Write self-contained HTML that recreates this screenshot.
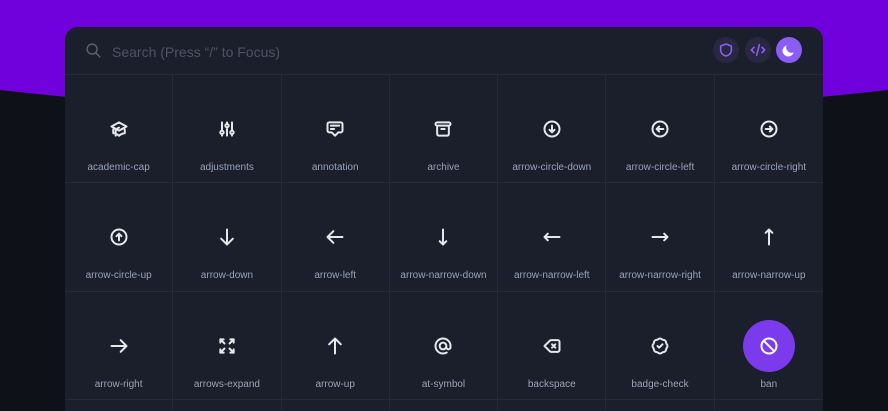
<!DOCTYPE html>
<html><head><meta charset="utf-8"><style>
*{margin:0;padding:0;box-sizing:border-box}
body{width:888px;height:411px;overflow:hidden;background:#0e1118;font-family:"Liberation Sans",sans-serif;position:relative}
#bg{position:absolute;left:0;top:0}
.panel{position:absolute;left:65px;top:27px;width:758px;height:384px;background:#1b1f2b;border-radius:13px 13px 0 0;overflow:hidden}
.head{height:48px;border-bottom:1px solid #262b38;position:relative}
.search{position:absolute;left:47px;top:17px;font-size:14px;color:#4b5466}
.grid{display:grid;grid-template-columns:repeat(7,1fr)}
.cell{height:108.4px;border-right:1px solid #262b38;border-bottom:1px solid #262b38;position:relative}
.cell.s{height:10px;border-bottom:none}
.cell:nth-child(7n){border-right:none}
.cell svg{position:absolute;left:50%;top:44px;margin-left:-10px;width:20px;height:20px}
.cell svg path{stroke-width:2.4}
.cell span{position:absolute;left:0;right:0;top:87px;text-align:center;font-size:10px;color:#97a3b8}
.btn{position:absolute;top:10px;width:26px;height:26px;border-radius:50%;background:#2a2740}
.btn svg{position:absolute;left:5px;top:5px;width:16px;height:16px}
.ban{position:absolute;left:50%;top:28px;margin-left:-26px;width:52px;height:52px;border-radius:50%;background:#7c3aed}
</style></head><body>
<svg id="bg" width="888" height="411"><path d="M0 0H888V90Q444 140 0 90Z" fill="#7000dc"/></svg>
<div class="panel">
<div class="head">
<svg style="position:absolute;left:20px;top:15px" width="17" height="17" viewBox="0 0 24 24" fill="none" stroke="#5a6274" stroke-width="2" stroke-linecap="round"><path d="M21 21l-6-6m2-5a7 7 0 11-14 0 7 7 0 0114 0z"/></svg>
<div class="search">Search (Press “/” to Focus)</div>
<div class="btn" style="left:648px"><svg viewBox="0 0 24 24" fill="none" stroke="#8b5cf6" stroke-width="2.4" stroke-linejoin="round"><path d="M12 3l8 3v6c0 5-4 8-8 9-4-1-8-4-8-9V6z"/></svg></div>
<div class="btn" style="left:680px"><svg viewBox="0 0 24 24" fill="none" stroke="#8b5cf6" stroke-width="2.4" stroke-linecap="round" stroke-linejoin="round"><path d="M10 20l4-16m4 4l4 4-4 4M6 16l-4-4 4-4"/></svg></div>
<div class="btn" style="left:711px;background:#8b5cf6"><svg viewBox="0 0 24 24"><path d="M19 15.5A8 8 0 018.5 5 8.5 8.5 0 1019 15.5z" fill="#fff"/></svg></div>
</div>
<div class="grid">
<div class="cell"><svg viewBox="0 0 24 24" fill="none" stroke="#e5e7eb" stroke-width="2" stroke-linecap="round" stroke-linejoin="round"><path d="M12 14l9-5-9-5-9 5 9 5zm0 0l6.16-3.422a12.083 12.083 0 01.665 6.479A11.952 11.952 0 0012 20.055a11.952 11.952 0 00-6.824-2.998 12.078 12.078 0 01.665-6.479L12 14zm-4 6v-7.5l4-2.222"/></svg><span>academic-cap</span></div>
<div class="cell"><svg viewBox="0 0 24 24" fill="none" stroke="#e5e7eb" stroke-width="2" stroke-linecap="round" stroke-linejoin="round"><path d="M12 6V4m0 2a2 2 0 100 4m0-4a2 2 0 110 4m-6 8a2 2 0 100-4m0 4a2 2 0 110-4m0 4v2m0-6V4m6 6v10m6-2a2 2 0 100-4m0 4a2 2 0 110-4m0 4v2m0-6V4"/></svg><span>adjustments</span></div>
<div class="cell"><svg viewBox="0 0 24 24" fill="none" stroke="#e5e7eb" stroke-width="2" stroke-linecap="round" stroke-linejoin="round"><path d="M7 8h10M7 12h4m1 8l-4-4H5a2 2 0 01-2-2V6a2 2 0 012-2h14a2 2 0 012 2v8a2 2 0 01-2 2h-3l-4 4z"/></svg><span>annotation</span></div>
<div class="cell"><svg viewBox="0 0 24 24" fill="none" stroke="#e5e7eb" stroke-width="2" stroke-linecap="round" stroke-linejoin="round"><path d="M5 8h14M5 8a2 2 0 110-4h14a2 2 0 110 4M5 8v10a2 2 0 002 2h10a2 2 0 002-2V8m-9 4h4"/></svg><span>archive</span></div>
<div class="cell"><svg viewBox="0 0 24 24" fill="none" stroke="#e5e7eb" stroke-width="2" stroke-linecap="round" stroke-linejoin="round"><path d="M15 13l-3 3m0 0l-3-3m3 3V8m0 13a9 9 0 110-18 9 9 0 010 18z"/></svg><span>arrow-circle-down</span></div>
<div class="cell"><svg viewBox="0 0 24 24" fill="none" stroke="#e5e7eb" stroke-width="2" stroke-linecap="round" stroke-linejoin="round"><path d="M11 15l-3-3m0 0l3-3m-3 3h8M3 12a9 9 0 1118 0 9 9 0 01-18 0z"/></svg><span>arrow-circle-left</span></div>
<div class="cell"><svg viewBox="0 0 24 24" fill="none" stroke="#e5e7eb" stroke-width="2" stroke-linecap="round" stroke-linejoin="round"><path d="M13 9l3 3m0 0l-3 3m3-3H8m13 0a9 9 0 11-18 0 9 9 0 0118 0z"/></svg><span>arrow-circle-right</span></div>
<div class="cell"><svg viewBox="0 0 24 24" fill="none" stroke="#e5e7eb" stroke-width="2" stroke-linecap="round" stroke-linejoin="round"><path d="M9 11l3-3m0 0l3 3m-3-3v8m0-13a9 9 0 110 18 9 9 0 010-18z"/></svg><span>arrow-circle-up</span></div>
<div class="cell"><svg viewBox="0 0 24 24" fill="none" stroke="#e5e7eb" stroke-width="2" stroke-linecap="round" stroke-linejoin="round"><path d="M19 14l-7 7m0 0l-7-7m7 7V3"/></svg><span>arrow-down</span></div>
<div class="cell"><svg viewBox="0 0 24 24" fill="none" stroke="#e5e7eb" stroke-width="2" stroke-linecap="round" stroke-linejoin="round"><path d="M10 19l-7-7m0 0l7-7m-7 7h18"/></svg><span>arrow-left</span></div>
<div class="cell"><svg viewBox="0 0 24 24" fill="none" stroke="#e5e7eb" stroke-width="2" stroke-linecap="round" stroke-linejoin="round"><path d="M16 17l-4 4m0 0l-4-4m4 4V3"/></svg><span>arrow-narrow-down</span></div>
<div class="cell"><svg viewBox="0 0 24 24" fill="none" stroke="#e5e7eb" stroke-width="2" stroke-linecap="round" stroke-linejoin="round"><path d="M7 16l-4-4m0 0l4-4m-4 4h18"/></svg><span>arrow-narrow-left</span></div>
<div class="cell"><svg viewBox="0 0 24 24" fill="none" stroke="#e5e7eb" stroke-width="2" stroke-linecap="round" stroke-linejoin="round"><path d="M17 8l4 4m0 0l-4 4m4-4H3"/></svg><span>arrow-narrow-right</span></div>
<div class="cell"><svg viewBox="0 0 24 24" fill="none" stroke="#e5e7eb" stroke-width="2" stroke-linecap="round" stroke-linejoin="round"><path d="M8 7l4-4m0 0l4 4m-4-4v18"/></svg><span>arrow-narrow-up</span></div>
<div class="cell"><svg viewBox="0 0 24 24" fill="none" stroke="#e5e7eb" stroke-width="2" stroke-linecap="round" stroke-linejoin="round"><path d="M14 5l7 7m0 0l-7 7m7-7H3"/></svg><span>arrow-right</span></div>
<div class="cell"><svg viewBox="0 0 24 24" fill="none" stroke="#e5e7eb" stroke-width="2" stroke-linecap="round" stroke-linejoin="round"><path d="M4 8V4m0 0h4M4 4l5 5m11-1V4m0 0h-4m4 0l-5 5M4 16v4m0 0h4m-4 0l5-5m11 5l-5-5m5 5v-4m0 4h-4"/></svg><span>arrows-expand</span></div>
<div class="cell"><svg viewBox="0 0 24 24" fill="none" stroke="#e5e7eb" stroke-width="2" stroke-linecap="round" stroke-linejoin="round"><path d="M5 10l7-7m0 0l7 7m-7-7v18"/></svg><span>arrow-up</span></div>
<div class="cell"><svg viewBox="0 0 24 24" fill="none" stroke="#e5e7eb" stroke-width="2" stroke-linecap="round" stroke-linejoin="round"><path d="M16 12a4 4 0 10-8 0 4 4 0 008 0zm0 0v1.5a2.5 2.5 0 005 0V12a9 9 0 10-9 9m4.5-1.206a8.959 8.959 0 01-4.5 1.207"/></svg><span>at-symbol</span></div>
<div class="cell"><svg viewBox="0 0 24 24" fill="none" stroke="#e5e7eb" stroke-width="2" stroke-linecap="round" stroke-linejoin="round"><path d="M12 14l2-2m0 0l2-2m-2 2l-2-2m2 2l2 2M3 12l6.414 6.414a2 2 0 001.414.586H19a2 2 0 002-2V7a2 2 0 00-2-2h-8.172a2 2 0 00-1.414.586L3 12z"/></svg><span>backspace</span></div>
<div class="cell"><svg viewBox="0 0 24 24" fill="none" stroke="#e5e7eb" stroke-width="2" stroke-linecap="round" stroke-linejoin="round"><path d="M9 12l2 2 4-4M7.835 4.697a3.42 3.42 0 001.946-.806 3.42 3.42 0 014.438 0 3.42 3.42 0 001.946.806 3.42 3.42 0 013.138 3.138 3.42 3.42 0 00.806 1.946 3.42 3.42 0 010 4.438 3.42 3.42 0 00-.806 1.946 3.42 3.42 0 01-3.138 3.138 3.42 3.42 0 00-1.946.806 3.42 3.42 0 01-4.438 0 3.42 3.42 0 00-1.946-.806 3.42 3.42 0 01-3.138-3.138 3.42 3.42 0 00-.806-1.946 3.42 3.42 0 010-4.438 3.42 3.42 0 00.806-1.946 3.42 3.42 0 013.138-3.138z"/></svg><span>badge-check</span></div>
<div class="cell"><div class="ban"></div><svg viewBox="0 0 24 24" fill="none" stroke="#fff" stroke-width="2" stroke-linecap="round" stroke-linejoin="round"><path d="M18.364 18.364A9 9 0 005.636 5.636m12.728 12.728A9 9 0 015.636 5.636m12.728 12.728L5.636 5.636"/></svg><span>ban</span></div>
<div class="cell s"></div><div class="cell s"></div><div class="cell s"></div><div class="cell s"></div><div class="cell s"></div><div class="cell s"></div><div class="cell s"></div>
</div>
</div>
</body></html>
